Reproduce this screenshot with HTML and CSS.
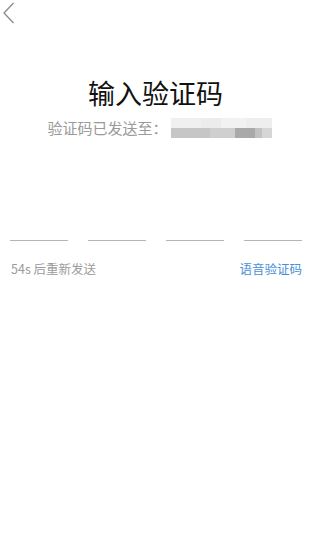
FILE: index.html
```html
<!DOCTYPE html>
<html lang="zh-CN">
<head>
<meta charset="utf-8">
<link rel="stylesheet" href="styles.css">
</head>
<body>
<div class="page">
  <div class="nav">
    <svg class="back" width="18" height="26" viewBox="0 0 18 26">
      <polyline points="13.5,3 4,13 13.5,23" fill="none" stroke="#8a8a8a" stroke-width="1.3"/>
    </svg>
  </div>
  <h1 class="title">输入验证码</h1>
  <div class="sent">
    <span class="sent-label">验证码已发送至：</span>
    <span class="phone">
      <span class="row top">
        <i style="background:#f0f0f0;width:30px"></i><i style="background:#ececec;width:20px"></i><i style="background:#f2f2f2;width:25px"></i><i style="background:#eeeeee;width:26px"></i>
      </span>
      <span class="row bottom">
        <i style="background:#c6c6c6;width:39px"></i><i style="background:#cfcfcf;width:25px"></i><i style="background:#a9a9a9;width:20px"></i><i style="background:#c2c2c2;width:7px"></i><i style="background:#d6d6d6;width:10px"></i>
      </span>
    </span>
  </div>
  <div class="code">
    <span class="cell"></span>
    <span class="cell"></span>
    <span class="cell"></span>
    <span class="cell"></span>
  </div>
  <div class="foot">
    <span class="count">54s 后重新发送</span>
    <span class="voice">语音验证码</span>
  </div>
</div>
</body>
</html>
```
FILE: styles.css
```css
html, body {
  margin: 0;
  padding: 0;
  background: #ffffff;
}
body {
  font-family: "Noto Sans CJK SC", "Noto Sans", sans-serif;
  width: 327px;
  height: 537px;
  overflow: hidden;
}
.page {
  display: flex;
  flex-direction: column;
}
.nav {
  height: 26px;
  display: flex;
  align-items: flex-start;
}
.back {
  display: block;
}
.title {
  margin: 49px 0 0;
  padding-right: 16px;
  font-size: 27px;
  line-height: 36px;
  font-weight: 400;
  color: #111111;
  text-align: center;
}
.sent {
  margin-top: 7px;
  display: flex;
  justify-content: center;
  align-items: center;
  padding-right: 8px;
  height: 20px;
}
.sent-label {
  font-size: 15px;
  line-height: 20px;
  color: #9a9a9a;
}
.phone {
  display: flex;
  flex-direction: column;
  width: 101px;
  margin-left: 3px;
}
.phone .row {
  display: flex;
  height: 10px;
}
.phone .row i {
  display: block;
  height: 100%;
}
.code {
  margin-top: 63px;
  padding: 0 25px 0 10px;
  display: grid;
  grid-template-columns: repeat(4, 1fr);
  column-gap: 19.5px;
}
.cell {
  height: 39px;
  border-bottom: 1px solid #b4b4b4;
}
.foot {
  margin-top: 19px;
  padding: 0 25px 0 11px;
  display: flex;
  justify-content: space-between;
  align-items: center;
  font-size: 12.5px;
  line-height: 18px;
}
.count {
  color: #9b9b9b;
}
.voice {
  color: #4a90d9;
}
```
